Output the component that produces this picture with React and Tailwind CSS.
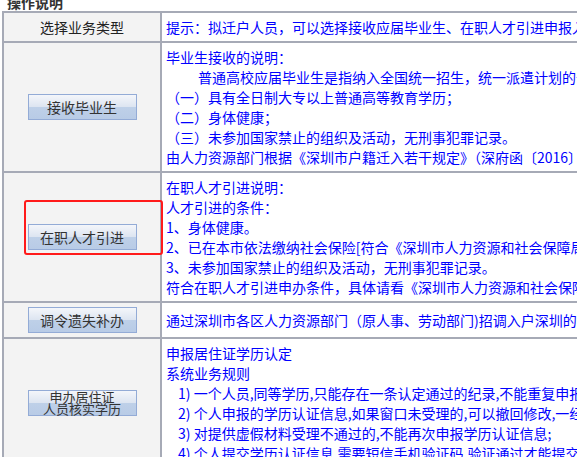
import React from 'react';

const font = { fontFamily: '"Noto Sans CJK SC", "Noto Sans", sans-serif' };

const rows = [
  {
    button: '接收毕业生',
    lines: [
      { text: '毕业生接收的说明：' },
      { text: '普通高校应届毕业生是指纳入全国统一招生，统一派遣计划的普通高校毕业生。', indent: 'pl-[32px]' },
      { text: '（一）具有全日制大专以上普通高等教育学历；' },
      { text: '（二）身体健康；' },
      { text: '（三）未参加国家禁止的组织及活动，无刑事犯罪记录。' },
      { text: '由人力资源部门根据《深圳市户籍迁入若干规定》（深府函〔2016〕号）办理。' },
    ],
  },
  {
    button: '在职人才引进',
    lines: [
      { text: '在职人才引进说明：' },
      { text: '人才引进的条件：' },
      { text: '1、身体健康。' },
      { text: '2、已在本市依法缴纳社会保险[符合《深圳市人力资源和社会保障局》规定]。' },
      { text: '3、未参加国家禁止的组织及活动，无刑事犯罪记录。' },
      { text: '符合在职人才引进申办条件，具体请看《深圳市人力资源和社会保障局》网站。' },
    ],
  },
  {
    button: '调令遗失补办',
    lines: [{ text: '通过深圳市各区人力资源部门（原人事、劳动部门)招调入户深圳的人员。' }],
  },
  {
    button: ['申办居住证', '人员核实学历'],
    lines: [
      { text: '申报居住证学历认定' },
      { text: '系统业务规则' },
      { text: '1) 一个人员,同等学历,只能存在一条认定通过的纪录,不能重复申报;', indent: 'pl-[12px]' },
      { text: '2) 个人申报的学历认证信息,如果窗口未受理的,可以撤回修改,一经受理不能修改;', indent: 'pl-[12px]' },
      { text: '3) 对提供虚假材料受理不通过的,不能再次申报学历认证信息;', indent: 'pl-[12px]' },
      { text: '4) 个人提交学历认证信息,需要短信手机验证码,验证通过才能提交;', indent: 'pl-[12px]' },
    ],
  },
];

const BizButton = ({ label }) => {
  const two = Array.isArray(label);
  return (
    <button
      className={`w-[109px] h-[26px] border border-[#93abd6] bg-[linear-gradient(to_bottom,#f4f6fa_0%,#dde5f1_48%,#bed0e8_52%,#b8cbe6_100%)] text-[#333] flex flex-col items-center justify-center ${two ? 'text-[13px] leading-[12px]' : 'text-[14px] leading-[20px]'}`}
      style={font}
    >
      {two ? label.map((l) => <span key={l}>{l}</span>) : label}
    </button>
  );
};

export default function App() {
  return (
    <div className="relative w-[577px] h-[457px] overflow-hidden bg-white" style={font}>
      <div className="h-[11px] overflow-hidden pl-[7px]">
        <div className="-mt-[5px] text-[14px] leading-[14px] font-bold text-[#333]">操作说明</div>
      </div>

      <div className="ml-[2px] w-[1000px] border-t-2 border-l-2 border-[#a6aab6]">
        <div className="flex border-b-2 border-[#a6aab6]">
          <div className="w-[158px] shrink-0 bg-[#f3f3f3] border-r-2 border-[#a6aab6] py-[4px] text-center text-[14px] leading-[20px] text-[#222]">
            选择业务类型
          </div>
          <div className="flex-1 py-[4px] pl-[4px] text-[14px] leading-[20px] text-[#0000ff] whitespace-nowrap">
            提示：拟迁户人员，可以选择接收应届毕业生、在职人才引进申报入户业务。
          </div>
        </div>

        {rows.map((row, i) => (
          <div key={i} className="flex border-b-2 border-[#a6aab6]">
            <div className="w-[158px] shrink-0 bg-[#f3f3f3] border-r-2 border-[#a6aab6] py-[4px] flex items-center justify-center">
              <BizButton label={row.button} />
            </div>
            <div className="flex-1 py-[4px] pl-[4px] text-[14px] leading-[20px] text-[#0000ff] whitespace-nowrap flex flex-col justify-center">
              {row.lines.map((l, j) => (
                <div key={j} className={l.indent || ''}>
                  {l.text}
                </div>
              ))}
            </div>
          </div>
        ))}
      </div>

      {/* annotation box */}
      <div className="absolute left-[24px] top-[200px] w-[139px] h-[55px] border-2 border-[#ff1a1a] rounded-[3px]" />
    </div>
  );
}
